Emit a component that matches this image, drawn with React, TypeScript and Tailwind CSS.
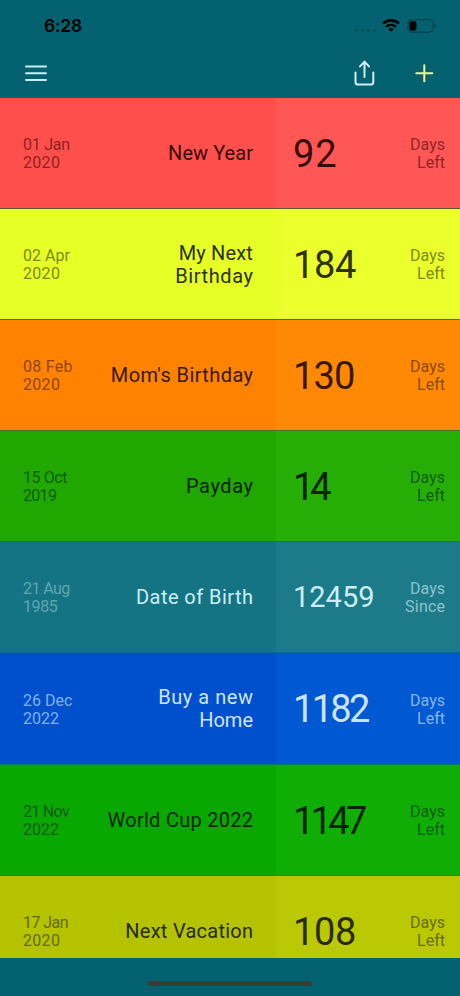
import React from "react";

type Line = [text: string, tracking?: string];

type Row = {
  date: Line[];
  title: Line[];
  count: string;
  unit: Line[];
  row: string;
  side: string;
  dateStyle: string;
  titleStyle: string;
  countStyle: string;
  unitStyle: string;
};

const rows: Row[] = [
  {
    date: [["01 Jan", "tracking-[-0.25px]"], ["2020", "tracking-[0.3px]"]],
    title: [["New Year", "tracking-[0.05px]"]],
    count: "92",
    unit: [["Days"], ["Left"]],
    row: "h-[111px] bg-[#ff4f4d] border-[#5f5a28]",
    side: "bg-[#ff5656]",
    dateStyle: "text-[#8f211b]",
    titleStyle: "text-[#3a0907]",
    countStyle: "text-[38px] tracking-[1px] text-[#3a0907]",
    unitStyle: "text-[#8f2723]",
  },
  {
    date: [["02 Apr"], ["2020", "tracking-[0.3px]"]],
    title: [["My Next", "tracking-[0.15px]"], ["Birthday", "tracking-[0.6px] -mr-[0.6px]"]],
    count: "184",
    unit: [["Days"], ["Left"]],
    row: "h-[111px] bg-[#e6ff26] border-[#496f2c]",
    side: "bg-[#eaff2c]",
    dateStyle: "text-[#7e8b10]",
    titleStyle: "text-[#2e3206]",
    countStyle: "text-[38px] tracking-[-0.3px] text-[#2e3206]",
    unitStyle: "text-[#7e8b15]",
  },
  {
    date: [["08 Feb", "tracking-[0.3px]"], ["2020", "tracking-[0.3px]"]],
    title: [["Mom's Birthday", "tracking-[0.4px] -mr-[0.4px]"]],
    count: "130",
    unit: [["Days"], ["Left"]],
    row: "h-[111px] bg-[#ff8200] border-[#496f2c]",
    side: "bg-[#ff8805]",
    dateStyle: "text-[#8e4500]",
    titleStyle: "text-[#381900]",
    countStyle: "text-[38px] tracking-[-0.8px] text-[#381900]",
    unitStyle: "text-[#8e4800]",
  },
  {
    date: [["15 Oct", "tracking-[-0.4px]"], ["2019", "tracking-[-0.7px]"]],
    title: [["Payday", "tracking-[0.6px] -mr-[0.6px]"]],
    count: "14",
    unit: [["Days"], ["Left"]],
    row: "h-[111px] bg-[#20a800] border-[#0f7c48]",
    side: "bg-[#27ae06]",
    dateStyle: "text-[#0e5c00]",
    titleStyle: "text-[#052300]",
    countStyle: "text-[38px] tracking-[-4px] text-[#052300]",
    unitStyle: "text-[#115f02]",
  },
  {
    date: [["21 Aug", "tracking-[-0.6px]"], ["1985", "tracking-[-0.4px]"]],
    title: [["Date of Birth", "tracking-[0.45px] -mr-[0.45px]"]],
    count: "12459",
    unit: [["Days"], ["Since", "tracking-[0.2px] -mr-[0.2px]"]],
    row: "h-[111px] bg-[#157483] border-[#0a6b90]",
    side: "bg-[#1c7a89]",
    dateStyle: "text-[#5fa5b2]",
    titleStyle: "text-[#cbeef6]",
    countStyle: "text-[29px] pt-[1px] text-[#cbeef6]",
    unitStyle: "text-[#8cc3ce]",
  },
  {
    date: [["26 Dec"], ["2022"]],
    title: [["Buy a new", "tracking-[0.55px] -mr-[0.55px]"], ["Home"]],
    count: "1182",
    unit: [["Days"], ["Left"]],
    row: "h-[112px] bg-[#0050ce] border-[#0a7a55]",
    side: "bg-[#0058d2]",
    dateStyle: "text-[#7eb0ee]",
    titleStyle: "text-[#cde4ff]",
    countStyle: "text-[38px] tracking-[-2.7px] text-[#cde4ff]",
    unitStyle: "text-[#84b5f0]",
  },
  {
    date: [["21 Nov", "tracking-[-0.7px]"], ["2022"]],
    title: [["World Cup 2022", "tracking-[0.27px] -mr-[0.27px]"]],
    count: "1147",
    unit: [["Days"], ["Left"]],
    row: "h-[111px] bg-[#09a800] border-[#1d8050]",
    side: "bg-[#10ae04]",
    dateStyle: "text-[#045c00]",
    titleStyle: "text-[#012500]",
    countStyle: "text-[38px] tracking-[-3.7px] text-[#012500]",
    unitStyle: "text-[#066002]",
  },
  {
    date: [["17 Jan", "tracking-[-0.55px]"], ["2020", "tracking-[0.3px]"]],
    title: [["Next Vacation", "tracking-[0.25px] -mr-[0.25px]"]],
    count: "108",
    unit: [["Days"], ["Left"]],
    row: "h-[111px] bg-[#b4c200] border-[#496f2c]",
    side: "bg-[#bac903]",
    dateStyle: "text-[#636a00]",
    titleStyle: "text-[#282b00]",
    countStyle: "text-[38px] tracking-[-0.3px] text-[#282b00]",
    unitStyle: "text-[#666e02]",
  },
];

const Lines = ({ items }: { items: Line[] }) => (
  <>
    {items.map(([text, tracking = ""]) => (
      <span key={text} className={`block whitespace-nowrap ${tracking}`}>
        {text}
      </span>
    ))}
  </>
);

const StatusBar = () => (
  <div className="flex h-[49px] items-center justify-between pl-[44px] pr-[23px] pt-[2px]">
    <span className="pt-[1px] font-['Inter',sans-serif] text-[17.5px] font-semibold leading-none tracking-[-0.2px] text-black">
      6:28
    </span>
    <div className="flex items-center">
      <div className="mr-[6px] mt-[9px] flex gap-[3px]">
        <span className="h-[3px] w-[3px] rounded-full bg-[#034d5a]" />
        <span className="h-[3px] w-[3px] rounded-full bg-[#034d5a]" />
        <span className="h-[3px] w-[3px] rounded-full bg-[#034d5a]" />
        <span className="h-[3px] w-[3px] rounded-full bg-[#034d5a]" />
      </div>
      <svg width="18" height="13" viewBox="0 0 18 13" className="mr-[7px]" fill="none" stroke="#000">
        <path d="M1 4.6a11.5 11.5 0 0 1 16 0" strokeWidth="2.6" />
        <path d="M4 7.8a7.2 7.2 0 0 1 10 0" strokeWidth="2.3" />
        <path d="M9 12.8 6.3 10.3a4 4 0 0 1 5.4 0z" fill="#000" stroke="none" />
      </svg>
      <svg width="30" height="14" viewBox="0 0 30 14" fill="none">
        <rect x="0.9" y="0.6" width="25.2" height="12.6" rx="3.4" stroke="#033d48" />
        <rect x="2.5" y="2.3" width="7" height="9.2" rx="1.8" fill="#000" />
        <path d="M27.5 4.7c1.9.7 1.9 3.7 0 4.4z" fill="#033d48" />
      </svg>
    </div>
  </div>
);

const Toolbar = () => (
  <div className="flex h-[49px] items-center pb-[2px] pl-[24px] pr-[26px]">
    <svg width="24" height="18" viewBox="0 0 24 18" stroke="#c5f0f8" strokeWidth="2" strokeLinecap="round">
      <path d="M2 2.5h20M2 9.2h20M2 15.9h20" />
    </svg>
    <svg
      width="22"
      height="28"
      viewBox="0 0 22 28"
      className="ml-auto mr-[38px]"
      fill="none"
      stroke="#d3eefa"
      strokeWidth="2"
      strokeLinecap="round"
      strokeLinejoin="round"
    >
      <path d="M1.5 13.5v9.4a2.6 2.6 0 0 0 2.6 2.6h12.6a2.6 2.6 0 0 0 2.6-2.6v-9.4" />
      <path d="M10.5 18V2.8M6 7.4l4.5-4.8L15 7.4" />
    </svg>
    <svg width="20" height="20" viewBox="0 0 20 20" stroke="#f5f58c" strokeWidth="2" strokeLinecap="round">
      <path d="M10.3 2.2v16M2.3 10.2h16" />
    </svg>
  </div>
);

const EventRow = ({ item }: { item: Row }) => (
  <div className={`flex shrink-0 border-b ${item.row}`}>
    <div className="flex w-[276px] items-center justify-between pl-[23px] pr-[23px]">
      <div className={`pt-[2px] text-[16px] leading-[18px] ${item.dateStyle}`}>
        <Lines items={item.date} />
      </div>
      <div className={`pt-[1px] text-right text-[20px] leading-[23px] ${item.titleStyle}`}>
        <Lines items={item.title} />
      </div>
    </div>
    <div className={`flex flex-1 items-center justify-between pl-[17px] pr-[15px] ${item.side}`}>
      <div className={`pt-[1px] leading-none ${item.countStyle}`}>{item.count}</div>
      <div className={`pt-[2px] text-right text-[16px] leading-[18px] ${item.unitStyle}`}>
        <Lines items={item.unit} />
      </div>
    </div>
  </div>
);

const App = () => {
  return (
    <div className="flex h-[996px] w-[460px] flex-col overflow-hidden bg-[#04616f] font-['Roboto',sans-serif]">
      <StatusBar />
      <Toolbar />
      <main className="flex h-[860px] flex-col overflow-hidden">
        {rows.map((item) => (
          <EventRow key={item.title[0][0]} item={item} />
        ))}
      </main>
      <footer className="flex flex-1 justify-center pt-[23px]">
        <div className="h-[5px] w-[164px] rounded-full bg-[#3b3b3b]" />
      </footer>
    </div>
  );
};

export default App;
